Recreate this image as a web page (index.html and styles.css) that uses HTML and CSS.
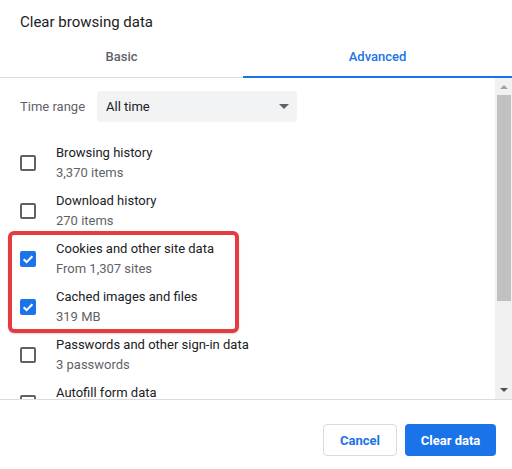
FILE: index.html
```html
<!DOCTYPE html>
<html>
<head>
<meta charset="utf-8">
<link rel="stylesheet" href="styles.css">
</head>
<body>
<div class="dialog">
  <div class="title">Clear browsing data</div>
  <div class="tabs">
    <div class="tab">Basic</div>
    <div class="tab active">Advanced</div>
  </div>
  <div class="scroller">
    <div class="content">
      <div class="range-row">
        <span class="range-label">Time range</span>
        <div class="select"><span>All time</span><span class="caret"></span></div>
      </div>
      <div class="item">
        <span class="cb"></span>
        <div class="labels"><div class="main">Browsing history</div><div class="sub">3,370 items</div></div>
      </div>
      <div class="item">
        <span class="cb"></span>
        <div class="labels"><div class="main">Download history</div><div class="sub">270 items</div></div>
      </div>
      <div class="item">
        <span class="cb checked"><svg viewBox="0 0 16 16" width="16" height="16"><path d="M3.6 8.3 L6.6 11.1 L12.4 5.2" fill="none" stroke="#fff" stroke-width="2"/></svg></span>
        <div class="labels"><div class="main">Cookies and other site data</div><div class="sub">From 1,307 sites</div></div>
      </div>
      <div class="item">
        <span class="cb checked"><svg viewBox="0 0 16 16" width="16" height="16"><path d="M3.6 8.3 L6.6 11.1 L12.4 5.2" fill="none" stroke="#fff" stroke-width="2"/></svg></span>
        <div class="labels"><div class="main">Cached images and files</div><div class="sub">319 MB</div></div>
      </div>
      <div class="item">
        <span class="cb"></span>
        <div class="labels"><div class="main">Passwords and other sign-in data</div><div class="sub">3 passwords</div></div>
      </div>
      <div class="item">
        <span class="cb"></span>
        <div class="labels"><div class="main">Autofill form data</div><div class="sub">&nbsp;</div></div>
      </div>
      <div class="highlight"></div>
    </div>
    <div class="scrollbar">
      <span class="arrow up"></span>
      <div class="track"><div class="thumb"></div></div>
      <span class="arrow down"></span>
    </div>
  </div>
  <div class="footer">
    <button class="btn cancel">Cancel</button>
    <button class="btn primary">Clear data</button>
  </div>
</div>
</body>
</html>
```
FILE: styles.css
```css
html, body {
  margin: 0;
  padding: 0;
  background: #fff;
}
body {
  font-family: Roboto, "Liberation Sans", sans-serif;
  color: #202124;
  font-size: 13px;
}
.dialog {
  width: 512px;
  height: 469px;
  display: flex;
  flex-direction: column;
  overflow: hidden;
}
.title {
  padding: 12px 20px 0;
  font-size: 15px;
  line-height: 20px;
  height: 26px;
  color: #202124;
}
.tabs {
  display: grid;
  grid-template-columns: 243px 1fr;
  border-bottom: 1px solid #dadce0;
  height: 39px;
}
.tab {
  height: 38px;
  line-height: 38px;
  text-align: center;
  font-weight: 500;
  color: #5f6368;
  font-size: 13px;
}
.tab.active {
  color: #1a73e8;
  border-bottom: 2px solid #1a73e8;
}
.scroller {
  height: 321px;
  display: flex;
}
.content {
  flex: 1;
  position: relative;
  overflow: hidden;
  padding: 13px 0 0 20px;
}
.range-row {
  display: flex;
  align-items: center;
  height: 31px;
  margin-bottom: 17px;
}
.range-label {
  color: #5f6368;
  width: 77px;
}
.select {
  width: 200px;
  height: 31px;
  box-sizing: border-box;
  background: #f1f3f4;
  border-radius: 4px;
  display: flex;
  align-items: center;
  justify-content: space-between;
  padding: 0 8px 0 9px;
}
.caret {
  width: 0;
  height: 0;
  border-left: 5px solid transparent;
  border-right: 5px solid transparent;
  border-top: 5px solid #5f6368;
}
.item {
  display: flex;
  align-items: center;
  gap: 20px;
  height: 48px;
}
.cb {
  width: 16px;
  height: 16px;
  box-sizing: border-box;
  border: 2px solid #5f6368;
  border-radius: 2px;
  flex: none;
  position: relative;
}
.cb.checked {
  border: none;
  background: #1a73e8;
}
.cb svg {
  display: block;
}
.labels {
  line-height: 20px;
}
.main {
  color: #202124;
}
.sub {
  color: #5f6368;
}
.highlight {
  position: absolute;
  left: 8px;
  top: 153px;
  width: 231px;
  height: 102px;
  box-sizing: border-box;
  border: 4px solid #e53a40;
  border-radius: 6px;
  box-shadow: 0 1px 2px rgba(0,0,0,0.15);
}
.scrollbar {
  width: 17px;
  background: #f1f1f1;
  display: flex;
  flex-direction: column;
  align-items: center;
}
.arrow {
  width: 0;
  height: 0;
  border-left: 4px solid transparent;
  border-right: 4px solid transparent;
  flex: none;
}
.arrow.up {
  border-bottom: 4px solid #a3a3a3;
  margin: 7px 0 6px;
}
.arrow.down {
  border-top: 4px solid #505050;
  margin: 6px 0 7px;
}
.track {
  flex: 1;
  width: 100%;
  display: flex;
  justify-content: center;
}
.thumb {
  width: 14px;
  height: 206px;
  background: #c1c1c1;
}
.footer {
  border-top: 1px solid #dadce0;
  display: flex;
  justify-content: flex-end;
  gap: 8px;
  padding: 24px 16px 0 0;
}
.btn {
  height: 32px;
  border-radius: 4px;
  font-family: Roboto, "Liberation Sans", sans-serif;
  font-size: 13px;
  font-weight: 700;
  padding: 0;
  box-sizing: border-box;
}
.cancel {
  width: 74px;
  background: #fff;
  color: #1a73e8;
  border: 1px solid #dadce0;
}
.primary {
  width: 91px;
  background: #1a73e8;
  color: #fff;
  border: none;
}
```
